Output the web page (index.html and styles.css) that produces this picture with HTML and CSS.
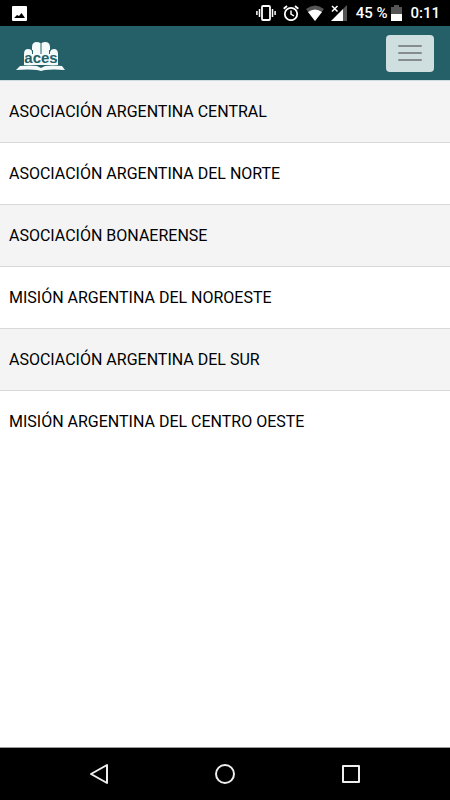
FILE: index.html
```html
<!DOCTYPE html>
<html lang="es">
<head>
    <meta charset="UTF-8">
    <meta name="viewport" content="width=device-width, initial-scale=1.0">
    <title>ACES - Asociaciones</title>
    <link rel="stylesheet" href="styles.css">
</head>
<body>
    <div class="status-bar">
        <svg class="picture" width="15" height="15" viewBox="0 0 15 15" aria-hidden="true">
            <rect width="15" height="15" rx="1" fill="#fff"/>
            <path d="M2 12l3-3 2 1 2.500-3L13 12z" fill="#000"/>
        </svg>
        <div class="status-icons">
            <svg width="20" height="16" viewBox="0 0 20 16" fill="none" stroke="#fff" aria-hidden="true">
                <rect x="6" y="1" width="8" height="14" rx="1" stroke-width="1.800"/>
                <path d="M3.500 4v8M16.500 4v8M.9 6v4M19.100 6v4" stroke-width="1.500"/>
            </svg>
            <svg width="16" height="16" viewBox="0 0 16 16" fill="none" stroke="#fff" aria-hidden="true">
                <circle cx="8" cy="9" r="6.200" stroke-width="1.800"/>
                <path d="M8 5.500V9l3 2" stroke-width="1.500"/>
                <path d="M.7 3.800L4 1M12 1l3.300 2.800" stroke-width="1.800"/>
            </svg>
            <svg width="18" height="16" viewBox="0 0 18 16" aria-hidden="true">
                <path d="M0 4Q9-3 18 4L9 16z" fill="#555"/>
                <path d="M2 7Q9 2 16 7L9 16z" fill="#fff"/>
            </svg>
            <svg width="16" height="16" viewBox="0 0 16 16" aria-hidden="true">
                <path d="M16 0v16h-4V4z" fill="#555"/>
                <path d="M12 4v12H0z" fill="#fff"/>
                <path d="M1 1l5.500 5.500M6.500 1L1 6.500" stroke="#fff" stroke-width="1.500"/>
            </svg>
        </div>
        <span class="percent">45 %</span>
        <svg width="11" height="16" viewBox="0 0 11 16" aria-hidden="true">
            <path d="M3 0h5v2h3v7H0V2h3z" fill="#555"/>
            <path d="M0 9h11v7H0z" fill="#fff"/>
        </svg>
        <span class="clock">0:11</span>
    </div>

    <header class="navbar">
        <a class="brand" href="#" aria-label="ACES">
            <svg width="50" height="30" viewBox="0 0 50 30">
                <!-- rounded book spines -->
                <g fill="#f4fafa">
                    <path d="M8 24V13q0-5 4-5t4 3V6q0-5 5-5 3 0 4 2 1-2 4-2 5 0 5 5v5q1-3 4-3 4 0 4 5v11z"/>
                    <path d="M4 25q10-1 17 0l4 2 4-2q7-1 17 0l3 4q-12-1-20 0l-4 1-4-1q-8-1-21 0z"/>
                </g>
                <path d="M16.500 9v4M25 3v10M33.500 9v4" stroke="#255f68"/>
                <text class="letters" x="25" y="22" text-anchor="middle">aces</text>
            </svg>
        </a>
        <button class="toggler" type="button" aria-label="Menú">
            <svg width="24" height="18" viewBox="0 0 24 18" stroke="#858c8d" stroke-width="2" stroke-linecap="round">
                <path d="M1 2h22M1 9h22M1 16h22"/>
            </svg>
        </button>
    </header>

    <main>
        <ul class="list">
            <li><a href="#">ASOCIACIÓN ARGENTINA CENTRAL</a></li>
            <li><a href="#">ASOCIACIÓN ARGENTINA DEL NORTE</a></li>
            <li><a href="#">ASOCIACIÓN BONAERENSE</a></li>
            <li><a href="#">MISIÓN ARGENTINA DEL NOROESTE</a></li>
            <li><a href="#">ASOCIACIÓN ARGENTINA DEL SUR</a></li>
            <li><a href="#">MISIÓN ARGENTINA DEL CENTRO OESTE</a></li>
        </ul>
    </main>

    <nav class="system-nav">
        <button type="button" aria-label="Atrás">
            <svg width="20" height="22" viewBox="0 0 20 22"><path d="M18 2v18L2 11z"/></svg>
        </button>
        <button type="button" aria-label="Inicio">
            <svg width="22" height="22" viewBox="0 0 22 22"><circle cx="11" cy="11" r="9"/></svg>
        </button>
        <button type="button" aria-label="Recientes">
            <svg width="20" height="20" viewBox="0 0 20 20"><path d="M2 2h16v16H2z"/></svg>
        </button>
    </nav>
</body>
</html>
```
FILE: styles.css
```css
* {
    box-sizing: border-box;
}
body {
    margin: 0;
    min-height: 100vh;
    display: flex;
    flex-direction: column;
    font-family: Roboto, sans-serif;
    font-size: 16px;
    color: #000;
    background: #fff;
}
svg {
    display: block;
}
.status-bar {
    display: flex;
    align-items: center;
    height: 26px;
    padding: 0 10px 0 12px;
    background: #000;
    color: #fff;
    font-size: 15px;
    font-weight: 500;
}
.picture {
    margin-right: auto;
}
.status-icons {
    display: flex;
    gap: 7px;
}
.percent {
    margin: 0 4px 0 9px;
}
.clock {
    margin-left: 8px;
}
.navbar {
    display: flex;
    align-items: center;
    justify-content: space-between;
    height: 55px;
    padding: 0 16px;
    background: #255f68;
    border-bottom: 1px solid #d0dcde;
}
.brand {
    padding-top: 6px;
}
.letters {
    font-family: "Liberation Sans", sans-serif;
    font-size: 15px;
    font-weight: bold;
    fill: #255f68;
}
.toggler {
    display: flex;
    align-items: center;
    justify-content: center;
    width: 48px;
    height: 37px;
    padding: 0;
    border: none;
    border-radius: 4px;
    background: #cfdedf;
    cursor: pointer;
}
.list {
    margin: 0;
    padding: 0;
    list-style: none;
}
.list li {
    border-bottom: 1px solid #d9d9d9;
}
.list li:nth-child(odd) {
    background: #f4f4f4;
}
.list li:last-child {
    border-bottom: none;
}
.list a {
    display: block;
    padding: 0 9px;
    line-height: 61px;
    color: inherit;
    text-decoration: none;
}
.system-nav {
    display: flex;
    align-items: center;
    justify-content: space-between;
    height: 53px;
    margin-top: auto;
    padding: 0 88px;
    border-top: 1px solid #999;
    background: #000;
}
.system-nav button {
    display: flex;
    justify-content: center;
    width: 22px;
    padding: 0;
    border: none;
    background: none;
}
.system-nav svg {
    fill: none;
    stroke: #eee;
    stroke-width: 2px;
    stroke-linejoin: round;
}
```
